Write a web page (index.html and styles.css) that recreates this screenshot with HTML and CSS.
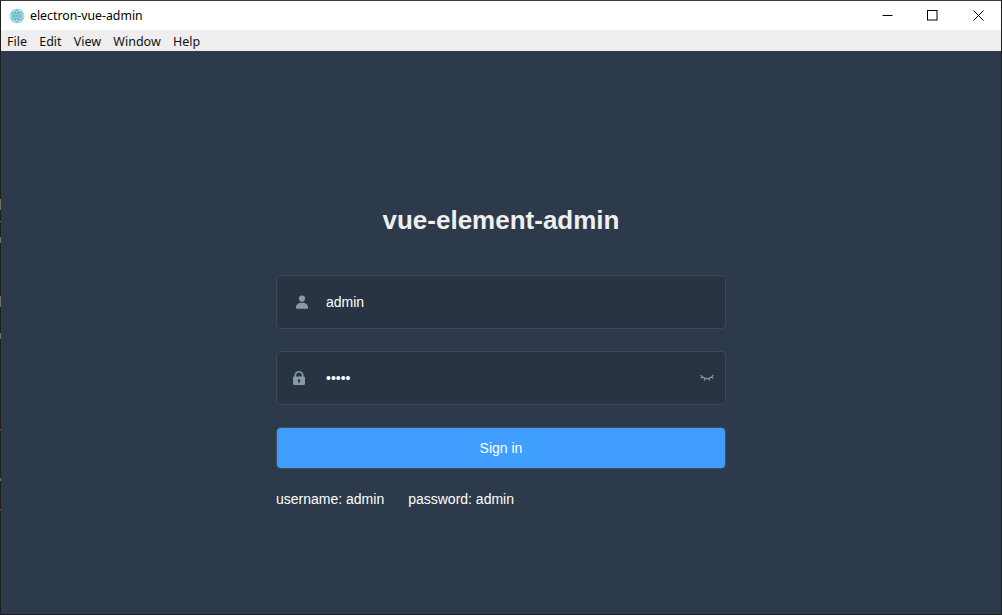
FILE: index.html
```html
<!DOCTYPE html>
<html lang="en">
<head>
<meta charset="utf-8">
<title>electron-vue-admin</title>
<link rel="stylesheet" href="styles.css">
</head>
<body>
<div class="window">
  <header class="titlebar">
    <div class="app-title">
      <svg class="app-icon" width="16" height="16" viewBox="0 0 16 16">
        <circle cx="8" cy="8" r="7.5" fill="#a6e0ea"/>
        <g fill="none" stroke="#6ea6b2" stroke-width=".8">
          <ellipse cx="8" cy="8" rx="6" ry="2.4" transform="rotate(30 8 8)"/>
          <ellipse cx="8" cy="8" rx="6" ry="2.4" transform="rotate(90 8 8)"/>
          <ellipse cx="8" cy="8" rx="6" ry="2.4" transform="rotate(150 8 8)"/>
        </g>
        <circle cx="8" cy="8" r="1.1" fill="#6ea6b2"/>
      </svg>
      <span>electron-vue-admin</span>
    </div>
    <div class="win-controls">
      <button class="win-btn" aria-label="Minimize"><svg width="11" height="11" viewBox="0 0 11 11"><path d="M0.5 5.5h10" stroke="#000" fill="none"/></svg></button>
      <button class="win-btn" aria-label="Maximize"><svg width="11" height="11" viewBox="0 0 11 11"><rect x=".5" y=".5" width="9.5" height="9.5" stroke="#000" fill="none"/></svg></button>
      <button class="win-btn" aria-label="Close"><svg width="11" height="11" viewBox="0 0 11 11"><path d="M.5.5l10 10M10.5.5l-10 10" stroke="#000" fill="none"/></svg></button>
    </div>
  </header>
  <nav class="menubar">
    <span>File</span><span>Edit</span><span>View</span><span>Window</span><span>Help</span>
  </nav>
  <main class="login">
    <form class="login-form">
      <h1 class="login-title">vue-element-admin</h1>
      <div class="field">
        <svg class="field-icon" width="14" height="14" viewBox="0 0 14 14"><circle cx="7" cy="3.6" r="3.1" fill="#889aa4"/><path d="M1 13c-.3-3.6 2.4-5.3 6-5.300s6.300 1.700 6 5.300c0 .4-.3.700-.7.700H1.700c-.4 0-.7-.3-.7-.7z" fill="#889aa4"/></svg>
        <input class="field-input" type="text" value="admin" aria-label="Username">
      </div>
      <div class="field">
        <svg class="field-icon field-icon-lock" width="14" height="14" viewBox="0 0 14 14"><path fill-rule="evenodd" fill="#889aa4" d="M2.500 5.500V4.300C2.500 1.900 4.500 0 7 0s4.500 1.900 4.500 4.300v1.200h.3c.7 0 1.200.5 1.200 1.200v6.100c0 .7-.5 1.200-1.200 1.200H2.200C1.500 14 1 13.500 1 12.800V6.700c0-.7.500-1.200 1.200-1.200zM4.200 5.500h5.600V4.300C9.800 2.800 8.500 1.600 7 1.600S4.200 2.800 4.200 4.300zM7 8.300a1.300 1.300 0 0 0-.7 2.400v1h1.400v-1A1.300 1.300 0 0 0 7 8.300z"/></svg>
        <input class="field-input" type="password" value="admin" aria-label="Password">
        <svg class="eye" width="14" height="8" viewBox="0 0 14 8"><path d="M.5 1C3 4 5 4.700 7 4.700S11 4 13.500 1M2.300 2.800L.8 4.300M5 4.500L4.400 6.700M9 4.500l.6 2.200M11.700 2.800l1.500 1.500" fill="none" stroke="#889aa4" stroke-width="1.100"/></svg>
      </div>
      <button class="submit" type="button">Sign in</button>
      <div class="tips">
        <span>username: admin</span>
        <span>password: admin</span>
      </div>
    </form>
  </main>
</div>
</body>
</html>
```

FILE: styles.css
```css
* { box-sizing: border-box; }
html, body { margin: 0; height: 100%; }
body { font-family: "Liberation Sans", Arial, sans-serif; background: #2d3a4b; }

.window {
  position: relative;
  height: 615px;
  display: flex;
  flex-direction: column;
  border: 1px solid #1f1f1f;
  border-top-color: #3a3a3a;
}
/* desktop colours showing through the window's left edge */
.window::before {
  content: "";
  position: absolute;
  left: -1px;
  top: 198px;
  width: 1px;
  height: 320px;
  background: linear-gradient(to bottom,
    #6f7350 0 11px, transparent 11px 22px,
    #6f7350 22px 23px, transparent 23px 38px,
    #6f7350 38px 44px, transparent 44px 97px,
    #6f7350 97px 108px, transparent 108px 134px,
    #6f7350 134px 140px, transparent 140px 230px,
    #8a2a3a 230px 232px, transparent 232px 279px,
    #6a6a6a 279px 282px, transparent 282px 310px,
    #8a2a3a 310px 312px, transparent 312px);
}

.titlebar {
  height: 29px;
  flex: none;
  background: #fff;
  display: flex;
  align-items: center;
  justify-content: space-between;
}
.app-title {
  display: flex;
  align-items: center;
  gap: 5px;
  padding-left: 8px;
  font: 12.3px "Noto Sans", "Open Sans", sans-serif;
  color: #000;
}
.app-icon { display: block; }
.win-controls { display: flex; height: 100%; }
.win-btn {
  width: 45.500px;
  height: 100%;
  padding: 0;
  border: 0;
  background: none;
  display: flex;
  align-items: center;
  justify-content: center;
}
.win-btn svg { display: block; }

.menubar {
  height: 21px;
  flex: none;
  background: #eeeeee;
  display: flex;
  align-items: center;
  gap: 12.200px;
  padding: 2px 0 0 6px;
  font: 12.5px "Noto Sans", "Open Sans", sans-serif;
  color: #111;
}

.login {
  flex: 1;
  min-height: 0;
  background: #2d3a4b;
  display: flex;
  justify-content: center;
}
.login-form {
  width: 450px;
  padding-top: 154px;
  display: flex;
  flex-direction: column;
}
.login-title {
  margin: 0 0 39px;
  font-size: 26px;
  line-height: 31px;
  font-weight: 700;
  color: #eeeeee;
  text-align: center;
}

.field {
  height: 54px;
  margin-bottom: 22px;
  display: flex;
  align-items: center;
  background: rgba(0, 0, 0, 0.1);
  border: 1px solid rgba(255, 255, 255, 0.1);
  border-radius: 5px;
}
.field-icon { flex: none; margin: 0 17px 0 18px; display: block; }
.field-icon-lock { margin: 0 20px 0 15px; }
.field-input {
  flex: 1;
  min-width: 0;
  height: 47px;
  padding: 0;
  border: 0;
  outline: 0;
  background: transparent;
  font: 14px "Liberation Sans", Arial, sans-serif;
  color: #fff;
}
.eye { flex: none; margin-right: 11px; display: block; }

.submit {
  height: 42px;
  margin-bottom: 21px;
  padding: 0;
  border: 1px solid rgba(255, 255, 255, 0.1);
  border-radius: 5px;
  background: #409eff;
  background-clip: padding-box;
  color: #fff;
  font: 14px "Liberation Sans", Arial, sans-serif;
}

.tips {
  display: flex;
  gap: 24px;
  font-size: 14px;
  line-height: 18px;
  color: #fff;
}
```
